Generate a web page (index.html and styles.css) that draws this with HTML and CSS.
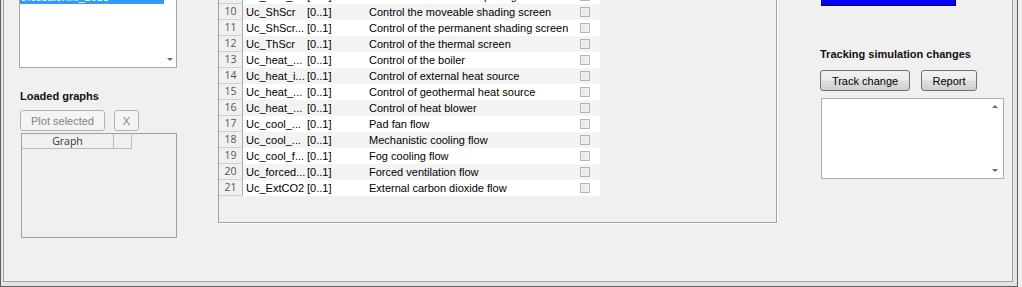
FILE: index.html
```html
<!DOCTYPE html>
<html lang="en">
<head>
  <meta charset="UTF-8" />
  <title>Greenhouse control inputs</title>
  <link rel="stylesheet" href="styles.css">
</head>
<body>
  <div class="window">
    <div class="client">

      <aside class="side">
        <div class="listbox">
          <div class="list-items">
            <div class="list-item selected">thessaloniki_2018</div>
          </div>
          <div class="list-scroll"><span class="arrow down"></span></div>
        </div>

        <h2 class="group-title">Loaded graphs</h2>
        <div class="btn-row">
          <button class="btn btn-plot" disabled>Plot selected</button>
          <button class="btn btn-x" disabled>X</button>
        </div>

        <div class="graph-table">
          <div class="graph-head">
            <span class="head-cell head-graph">Graph</span>
            <span class="head-cell head-extra"></span>
          </div>
        </div>
      </aside>

      <section class="panel">
        <div class="inputs">
          <div class="row"><div class="num">9</div><div class="cell">Uc_vent_...</div><div class="cell">[0..1]</div><div class="cell">Control of the window opening</div><div class="check"><span class="box"></span></div></div>
          <div class="row"><div class="num">10</div><div class="cell">Uc_ShScr</div><div class="cell">[0..1]</div><div class="cell">Control the moveable shading screen</div><div class="check"><span class="box"></span></div></div>
          <div class="row"><div class="num">11</div><div class="cell">Uc_ShScr...</div><div class="cell">[0..1]</div><div class="cell">Control of the permanent shading screen</div><div class="check"><span class="box"></span></div></div>
          <div class="row"><div class="num">12</div><div class="cell">Uc_ThScr</div><div class="cell">[0..1]</div><div class="cell">Control of the thermal screen</div><div class="check"><span class="box"></span></div></div>
          <div class="row"><div class="num">13</div><div class="cell">Uc_heat_...</div><div class="cell">[0..1]</div><div class="cell">Control of the boiler</div><div class="check"><span class="box"></span></div></div>
          <div class="row"><div class="num">14</div><div class="cell">Uc_heat_i...</div><div class="cell">[0..1]</div><div class="cell">Control of external heat source</div><div class="check"><span class="box"></span></div></div>
          <div class="row"><div class="num">15</div><div class="cell">Uc_heat_...</div><div class="cell">[0..1]</div><div class="cell">Control of geothermal heat source</div><div class="check"><span class="box"></span></div></div>
          <div class="row"><div class="num">16</div><div class="cell">Uc_heat_...</div><div class="cell">[0..1]</div><div class="cell">Control of heat blower</div><div class="check"><span class="box"></span></div></div>
          <div class="row"><div class="num">17</div><div class="cell">Uc_cool_...</div><div class="cell">[0..1]</div><div class="cell">Pad fan flow</div><div class="check"><span class="box"></span></div></div>
          <div class="row"><div class="num">18</div><div class="cell">Uc_cool_...</div><div class="cell">[0..1]</div><div class="cell">Mechanistic cooling flow</div><div class="check"><span class="box"></span></div></div>
          <div class="row"><div class="num">19</div><div class="cell">Uc_cool_f...</div><div class="cell">[0..1]</div><div class="cell">Fog cooling flow</div><div class="check"><span class="box"></span></div></div>
          <div class="row"><div class="num">20</div><div class="cell">Uc_forced...</div><div class="cell">[0..1]</div><div class="cell">Forced ventilation flow</div><div class="check"><span class="box"></span></div></div>
          <div class="row"><div class="num">21</div><div class="cell">Uc_ExtCO2</div><div class="cell">[0..1]</div><div class="cell">External carbon dioxide flow</div><div class="check"><span class="box"></span></div></div>
        </div>
      </section>

      <aside class="tracking">
        <div class="color-bar"></div>
        <h2 class="group-title">Tracking simulation changes</h2>
        <div class="btn-row wide">
          <button class="btn btn-track">Track change</button>
          <button class="btn btn-report">Report</button>
        </div>
        <div class="log">
          <div class="log-text"></div>
          <div class="log-scroll">
            <span class="arrow up"></span>
            <span class="arrow down"></span>
          </div>
        </div>
      </aside>

    </div>
  </div>
</body>
</html>
```

FILE: styles.css
```css
body {
  margin: 0;
  height: 287px;
  overflow: hidden;
  background-color: #f0f0f0;
  font-family: "Liberation Sans", Arial, sans-serif;
  font-size: 11px;
  color: #000;
}
.window {
  width: 1018px;
  height: 287px;
  box-sizing: border-box;
  border: solid #5f5f5f;
  border-width: 0 1px 1px 1px;
  padding: 0 4px 4px 2px;
  background-color: #e4e4e4;
}
.client {
  height: 100%;
  box-sizing: border-box;
  border: solid #a0a0a0;
  border-width: 0 1px 1px 1px;
  background-color: #f0f0f0;
  padding-left: 15px;
  display: flex;
  align-items: flex-start;
}

/* left column */
.side {
  width: 158px;
  display: flex;
  flex-direction: column;
}
.listbox {
  margin-top: -11px;
  height: 79px;
  box-sizing: border-box;
  border: 1px solid #a5a5a5;
  background-color: #fff;
  display: flex;
}
.list-items {
  width: 144px;
}
.list-item {
  height: 14px;
  line-height: 14px;
  padding-left: 1px;
  white-space: nowrap;
}
.list-item.selected {
  background-color: #3399ff;
  color: #fff;
}
.list-scroll {
  flex: 1;
  display: flex;
  flex-direction: column;
  justify-content: flex-end;
  align-items: center;
  padding-bottom: 6px;
}
.arrow {
  width: 0;
  height: 0;
  border-left: 3px solid transparent;
  border-right: 3px solid transparent;
}
.arrow.down {
  border-top: 3px solid #6a6a6a;
}
.arrow.up {
  border-bottom: 3px solid #6a6a6a;
}

.group-title {
  margin: 21px 0 0 1px;
  font-size: 11px;
  line-height: 14px;
  font-weight: bold;
  color: #111;
}
.btn-row {
  margin: 7px 0 0 1px;
  display: flex;
  gap: 9px;
}
.btn {
  height: 21px;
  padding: 0;
  font-family: "Liberation Sans", Arial, sans-serif;
  font-size: 11px;
  color: #000;
  border: 1px solid #707070;
  border-radius: 3px;
  background: linear-gradient(#f2f2f2 0%, #ebebeb 48%, #dddddd 52%, #cfcfcf 100%);
}
.btn:disabled {
  color: #838383;
  border-color: #adb2b5;
  background: #f4f4f4;
}
.btn-plot { width: 85px; }
.btn-x { width: 25px; }

.graph-table {
  margin: 2px 0 0 2px;
  width: 156px;
  height: 105px;
  box-sizing: border-box;
  border: 1px solid #a0a0a0;
  background-color: #f0f0f0;
}
.graph-head {
  display: flex;
}
.head-cell {
  height: 14px;
  box-sizing: content-box;
  border-right: 1px solid #bdbdbd;
  border-bottom: 1px solid #bdbdbd;
  font-family: "Open Sans", "DejaVu Sans", sans-serif;
  font-size: 10.5px;
  line-height: 14px;
  color: #333;
  text-align: center;
}
.head-graph { width: 91px; }
.head-extra { width: 17px; }

/* middle panel */
.panel {
  margin: -13px 0 0 41px;
  width: 559px;
  height: 236px;
  box-sizing: border-box;
  border: 1px solid #a0a0a0;
  box-shadow: 1px 1px 0 #fff;
}
.inputs {
  width: 381px;
}
.row {
  display: grid;
  grid-template-columns: 24px 62px 60px 205px 30px;
  height: 16px;
  background-color: #fff;
}
.row:nth-child(even) {
  background-color: #f3f3f3;
}
.num {
  box-sizing: border-box;
  border-right: 1px solid #a9a9a9;
  border-bottom: 1px solid #cfcfcf;
  background-color: #f0f0f0;
  font-family: "Open Sans", "DejaVu Sans", sans-serif;
  font-size: 10.5px;
  line-height: 15px;
  color: #555;
  text-align: center;
}
.cell {
  line-height: 16px;
  padding-left: 3px;
  white-space: nowrap;
  overflow: hidden;
}
.cell:nth-child(3) { padding-left: 2px; }
.cell:nth-child(4) { padding-left: 4px; }
.check {
  display: flex;
  align-items: center;
  padding-left: 10px;
}
.box {
  width: 10px;
  height: 10px;
  box-sizing: border-box;
  border: 1px solid #b4b4b4;
  background: linear-gradient(135deg, #dedede, #f7f7f7);
  box-shadow: inset 0 0 0 1px #f2f2f2;
}

/* right column */
.tracking {
  margin-left: 43px;
  width: 184px;
  display: flex;
  flex-direction: column;
}
.color-bar {
  margin: -10px 0 0 1px;
  width: 135px;
  height: 16px;
  box-sizing: border-box;
  border: 1px solid #00006a;
  background-color: #0000ff;
}
.tracking .group-title {
  margin: 41px 0 0 0;
}
.btn-row.wide {
  margin: 9px 0 0 0;
  gap: 11px;
}
.btn-track { width: 90px; }
.btn-report { width: 56px; }
.log {
  margin: 7px 0 0 1px;
  width: 183px;
  height: 81px;
  box-sizing: border-box;
  border: 1px solid #abadb3;
  background-color: #fff;
  display: flex;
}
.log-text {
  flex: 1;
}
.log-scroll {
  width: 16px;
  display: flex;
  flex-direction: column;
  justify-content: space-between;
  align-items: center;
  padding: 6px 0 6px;
}
```
